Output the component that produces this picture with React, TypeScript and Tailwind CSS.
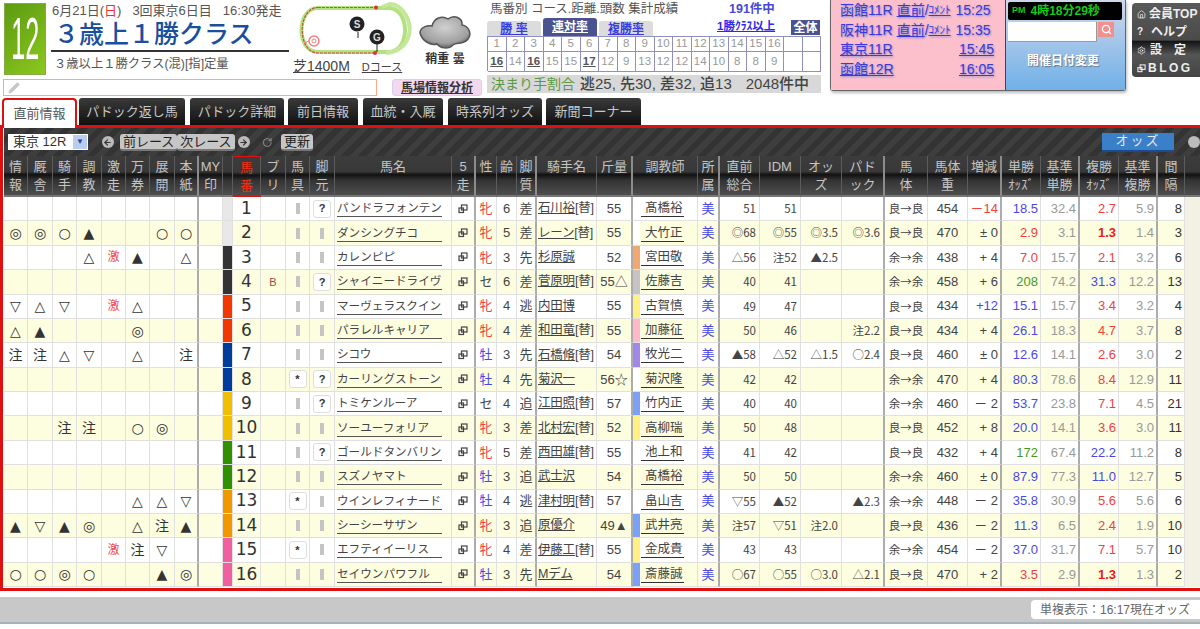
import React from 'react';
import { ArrowLeft, ArrowRight, Home, Pencil, RotateCw, Search, Settings } from 'lucide-react';

type Horse = {
  marks: string[]; frame: string; buri?: string; gear?: boolean; leg?: boolean; name: string;
  sex: string; age: number; style: string; jockey: string; kin: string; trainer: string; strip?: string;
  idx: string[]; body: string; weight: number; diff: string; win: string; winBase: string; place: string; placeBase: string; gap: number;
};

const e = ['', '', '', '', '', '', '', ''];
const horses: Horse[] = [
  { marks: e, frame: 'bg-[#e8e8e8]', leg: true, name: 'パンドラフォンテン', sex: '牝', age: 6, style: '差', jockey: '石川裕[替]', kin: '55', trainer: '髙橋裕', idx: ['51', '51', '', ''], body: '良→良', weight: 454, diff: '－14', win: '18.5', winBase: '32.4', place: '2.7', placeBase: '5.9', gap: 8 },
  { marks: ['◎', '◎', '○', '▲', '', '', '○', '○'], frame: 'bg-[#e8e8e8]', name: 'ダンシングチコ', sex: '牝', age: 5, style: '差', jockey: 'レーン[替]', kin: '55', trainer: '大竹正', strip: 'bg-white', idx: ['◎68', '◎55', '◎3.5', '◎3.6'], body: '良→良', weight: 470, diff: '± 0', win: '2.9', winBase: '3.1', place: '1.3', placeBase: '1.4', gap: 3 },
  { marks: ['', '', '', '△', '激', '▲', '', '△'], frame: 'bg-[#333333]', name: 'カレンピピ', sex: '牝', age: 3, style: '先', jockey: '杉原誠', kin: '52', trainer: '宮田敬', strip: 'bg-[#f0a870]', idx: ['△56', '注52', '▲2.5', ''], body: '余→余', weight: 438, diff: '+ 4', win: '7.0', winBase: '15.7', place: '2.1', placeBase: '3.2', gap: 6 },
  { marks: e, frame: 'bg-[#333333]', buri: 'B', leg: true, name: 'シャイニードライヴ', sex: 'セ', age: 6, style: '差', jockey: '菅原明[替]', kin: '55△', trainer: '佐藤吉', strip: 'bg-[#c4c4c4]', idx: ['40', '41', '', ''], body: '余→余', weight: 458, diff: '+ 6', win: '208', winBase: '74.2', place: '31.3', placeBase: '12.2', gap: 13 },
  { marks: ['▽', '△', '▽', '', '激', '△', '', ''], frame: 'bg-[#f03800]', name: 'マーヴェラスクイン', sex: '牝', age: 4, style: '逃', jockey: '内田博', kin: '55', trainer: '古賀慎', strip: 'bg-[#fff080]', idx: ['49', '47', '', ''], body: '良→良', weight: 434, diff: '+12', win: '15.1', winBase: '15.7', place: '3.4', placeBase: '3.2', gap: 4 },
  { marks: ['△', '▲', '', '', '', '◎', '', ''], frame: 'bg-[#f03800]', name: 'パラレルキャリア', sex: '牝', age: 4, style: '差', jockey: '和田竜[替]', kin: '55', trainer: '加藤征', strip: 'bg-[#ffb8c8]', idx: ['50', '46', '', '注2.2'], body: '良→良', weight: 434, diff: '+ 4', win: '26.1', winBase: '18.3', place: '4.7', placeBase: '3.7', gap: 8 },
  { marks: ['注', '注', '△', '▽', '', '△', '', '注'], frame: 'bg-[#003c9c]', name: 'シコウ', sex: '牡', age: 3, style: '先', jockey: '石橋脩[替]', kin: '54', trainer: '牧光二', strip: 'bg-[#a088e8]', idx: ['▲58', '△52', '△1.5', '○2.4'], body: '良→良', weight: 460, diff: '± 0', win: '12.6', winBase: '14.1', place: '2.6', placeBase: '3.0', gap: 2 },
  { marks: e, frame: 'bg-[#003c9c]', gear: true, leg: true, name: 'カーリングストーン', sex: '牡', age: 4, style: '先', jockey: '菊沢一', kin: '56☆', trainer: '菊沢隆', strip: 'bg-white', idx: ['42', '42', '', ''], body: '余→余', weight: 470, diff: '+ 4', win: '80.3', winBase: '78.6', place: '8.4', placeBase: '12.9', gap: 11 },
  { marks: e, frame: 'bg-[#f0c000]', leg: true, name: 'トミケンルーア', sex: 'セ', age: 4, style: '追', jockey: '江田照[替]', kin: '57', trainer: '竹内正', strip: 'bg-[#7aa0f8]', idx: ['40', '40', '', ''], body: '余→余', weight: 460, diff: '－ 2', win: '53.7', winBase: '23.8', place: '7.1', placeBase: '4.5', gap: 21 },
  { marks: ['', '', '注', '注', '', '○', '◎', ''], frame: 'bg-[#f0c000]', name: 'ソーユーフォリア', sex: '牝', age: 3, style: '差', jockey: '北村宏[替]', kin: '52', trainer: '高柳瑞', strip: 'bg-[#fff080]', idx: ['50', '48', '', ''], body: '良→良', weight: 452, diff: '+ 8', win: '20.0', winBase: '14.1', place: '3.6', placeBase: '3.0', gap: 11 },
  { marks: e, frame: 'bg-[#2f9000]', leg: true, name: 'ゴールドタンバリン', sex: '牝', age: 5, style: '差', jockey: '西田雄[替]', kin: '55', trainer: '池上和', idx: ['41', '42', '', ''], body: '良→良', weight: 432, diff: '+ 4', win: '172', winBase: '67.4', place: '22.2', placeBase: '11.2', gap: 8 },
  { marks: e, frame: 'bg-[#2f9000]', name: 'スズノヤマト', sex: '牡', age: 3, style: '追', jockey: '武士沢', kin: '54', trainer: '髙橋裕', idx: ['50', '50', '', ''], body: '余→余', weight: 460, diff: '± 0', win: '87.9', winBase: '77.3', place: '11.0', placeBase: '12.7', gap: 5 },
  { marks: ['', '', '', '', '', '△', '△', '▽'], frame: 'bg-[#f09800]', gear: true, name: 'ウインレフィナード', sex: '牡', age: 4, style: '逃', jockey: '津村明[替]', kin: '57', trainer: '畠山吉', idx: ['▽55', '▲52', '', '▲2.3'], body: '余→余', weight: 448, diff: '－ 2', win: '35.8', winBase: '30.9', place: '5.6', placeBase: '5.6', gap: 6 },
  { marks: ['▲', '▽', '▲', '◎', '', '△', '注', '▲'], frame: 'bg-[#f09800]', name: 'シーシーサザン', sex: '牝', age: 3, style: '追', jockey: '原優介', kin: '49▲', trainer: '武井亮', strip: 'bg-[#7aa0f8]', idx: ['注57', '▽51', '注2.0', ''], body: '良→良', weight: 436, diff: '－ 2', win: '11.3', winBase: '6.5', place: '2.4', placeBase: '1.9', gap: 10 },
  { marks: ['', '', '', '', '激', '注', '▽', ''], frame: 'bg-[#f060a0]', gear: true, name: 'エフティイーリス', sex: '牝', age: 4, style: '差', jockey: '伊藤工[替]', kin: '55', trainer: '金成貴', strip: 'bg-[#fff080]', idx: ['43', '43', '', ''], body: '余→余', weight: 454, diff: '－ 2', win: '37.0', winBase: '31.7', place: '7.1', placeBase: '5.7', gap: 10 },
  { marks: ['○', '○', '◎', '○', '', '', '▲', '◎'], frame: 'bg-[#f060a0]', name: 'セイウンパワフル', sex: '牡', age: 3, style: '先', jockey: 'Mデム', kin: '54', trainer: '斎藤誠', strip: 'bg-[#7aa0f8]', idx: ['○67', '○55', '○3.0', '△2.1'], body: '良→良', weight: 470, diff: '+ 2', win: '3.5', winBase: '2.9', place: '1.3', placeBase: '1.3', gap: 2 },
];

const headers: { a: string; b?: string; thick?: boolean; active?: boolean }[] = [
  { a: '情', b: '報' }, { a: '厩', b: '舎' }, { a: '騎', b: '手' }, { a: '調', b: '教' }, { a: '激', b: '走' },
  { a: '万', b: '券' }, { a: '展', b: '開' }, { a: '本', b: '紙', thick: true }, { a: 'MY', b: '印' }, { a: '' },
  { a: '馬', b: '番', active: true }, { a: 'ブ', b: 'リ' }, { a: '馬', b: '具' }, { a: '脚', b: '元' }, { a: '馬名' },
  { a: '5', b: '走', thick: true }, { a: '性' }, { a: '齢' }, { a: '脚', b: '質', thick: true }, { a: '騎手名' },
  { a: '斤量', thick: true }, { a: '調教師' }, { a: '所', b: '属', thick: true }, { a: '直前', b: '総合' }, { a: 'IDM' },
  { a: 'オッ', b: 'ズ' }, { a: 'パド', b: 'ック', thick: true }, { a: '馬', b: '体' }, { a: '馬体', b: '重' }, { a: '増減', thick: true },
  { a: '単勝', b: 'ｵｯｽﾞ' }, { a: '基準', b: '単勝', thick: true }, { a: '複勝', b: 'ｵｯｽﾞ' }, { a: '基準', b: '複勝', thick: true }, { a: '間', b: '隔' }, { a: '' },
];

const gridTop = ['1', '2', '3', '4', '5', '6', '7', '8', '9', '10', '11', '12', '13', '14', '15', '16', '', ''];
const gridBottom = ['16', '14', '16', '15', '15', '17', '12', '9', '13', '12', '12', '14', '10', '8', '8', '9', '', ''];

const tabClass = 'flex items-center justify-center rounded-t-[3px] bg-[linear-gradient(180deg,#3a3a3a,#111111)] text-[#c8c8c8]';

const winColor = (v: string) => {
  const n = parseFloat(v);
  if (n >= 100) return 'text-[#4a9a20]';
  if (n < 10) return 'text-[#f04040]';
  return 'text-[#4848e8]';
};
const placeColor = (v: string) => {
  const n = parseFloat(v);
  if (n < 2) return 'text-[#f01818] font-bold';
  if (n >= 10) return 'text-[#4848e8]';
  return 'text-[#f04040]';
};
const diffColor = (v: string) => {
  if (v === '－14') return 'text-[#f04040]';
  if (v === '+12') return 'text-[#4848e8]';
  return 'text-[#444444]';
};

const Cell = ({ thick, className, children }: { thick?: boolean; className?: string; children?: React.ReactNode }) => (
  <div className={`flex min-w-0 items-center overflow-hidden whitespace-nowrap border-b border-[#e0e0e0] ${thick ? 'border-r-2 border-r-[#acacac]' : 'border-r'} ${className ?? ''}`}>
    {children}
  </div>
);

const WinIcon = ({ color = '#444', size = 10 }: { color?: string; size?: number }) => (
  <svg width={size} height={size} viewBox="0 0 10 10" fill="none" stroke={color} strokeWidth="1.2">
    <rect x="3.5" y="1" width="5.5" height="5" />
    <rect x="1" y="4" width="4.5" height="4.5" />
  </svg>
);

const Bar = () => <span className="mx-auto h-[11px] w-[4px] bg-[#c4c4c4]" />;

const SmallBox = ({ children }: { children: string }) => (
  <span className="mx-auto flex h-[18px] w-[18px] items-center justify-center rounded-[3px] border border-[#dddddd] bg-white text-[11px] font-bold text-[#333333]">
    {children}
  </span>
);

const ToolButton = ({ children }: { children: string }) => (
  <span className="flex h-[17px] items-center rounded-[3px] border-b-2 border-[#777777] bg-[#c6c6c6] px-[3px] text-[13px] leading-none text-[#222222]">
    {children}
  </span>
);

const CircleIcon = ({ children }: { children?: React.ReactNode }) => (
  <span className="flex h-[12px] w-[12px] items-center justify-center rounded-full bg-[#bbbbbb] text-[#333333]">{children}</span>
);

const CourseMap = () => (
  <svg width="116" height="56" viewBox="0 0 116 56" fill="none">
    <path d="M20 6 H92 C112 8 112 48 92 50 H20 C-2 50 -2 6 20 6 Z" stroke="#b4e080" strokeWidth="4" />
    <path d="M84 5 L92 2 C104 2 116 20 110 36 C106 46 98 50 88 51" stroke="#c4e898" strokeWidth="4" />
    <path d="M20 5.5 H78 M77 51 H20 C-1 51 -1 5.5 20 5.5" stroke="#c85040" strokeWidth="1.2" strokeDasharray="3 1" />
    <circle cx="78" cy="5.5" r="2" fill="#e03030" />
    <circle cx="77" cy="51" r="2" fill="#e03030" />
    <circle cx="16" cy="39" r="5" fill="#ffffff" stroke="#f08080" strokeWidth="1.5" />
    <circle cx="16" cy="39" r="2" stroke="#f08080" />
    <path d="M11 39 L6 41" stroke="#f08080" />
    <path d="M60 30 V36" stroke="#222222" strokeWidth="1" />
    <circle cx="59" cy="22" r="7.5" fill="#222222" />
    <text x="59" y="25.5" textAnchor="middle" fontSize="10" fontWeight="700" fill="#dddddd">S</text>
    <path d="M79 42 V50" stroke="#222222" strokeWidth="1" />
    <circle cx="79" cy="35" r="7.5" fill="#222222" />
    <text x="79" y="38.5" textAnchor="middle" fontSize="10" fontWeight="700" fill="#dddddd">G</text>
  </svg>
);

const Cloud = () => (
  <svg width="54" height="38" viewBox="0 0 54 38">
    <defs>
      <radialGradient id="cloud" cx="50%" cy="35%" r="70%">
        <stop offset="0%" stopColor="#d0d0d0" />
        <stop offset="70%" stopColor="#a0a0a0" />
        <stop offset="100%" stopColor="#505050" />
      </radialGradient>
    </defs>
    <path d="M2 21 C2 15 10 13 14 14 C16 6 24 3 30 7 C36 2 45 6 44 13 C51 14 54 22 50 27 C46 33 38 30 35 33 C30 38 22 36 19 32 C13 34 4 29 2 21 Z" fill="url(#cloud)" stroke="#555555" strokeWidth="1.5" />
  </svg>
);

const App = () => {
  return (
    <div className="h-[629px] w-[1200px] overflow-hidden bg-white text-[13px] text-[#444444] [font-family:'Liberation_Sans','Noto_Sans_CJK_JP',sans-serif]">
      {/* top area */}
      <div className="flex h-[98px]">
        <div className="w-[482px] shrink-0 pl-[3px]">
          <div className="flex h-[79px]">
            <div className="ml-px mt-[3px] flex h-[72px] w-[42px] items-center justify-center overflow-hidden border border-[#88aa44] bg-[linear-gradient(135deg,#5c9a10,#8cc820)]">
              <span className="origin-center scale-x-[0.42] text-[60px] leading-none text-white">12</span>
            </div>
            <div className="ml-[5px] w-[238px] shrink-0">
              <div className="mt-[2px] h-[17px] whitespace-nowrap pl-px text-[13px] leading-[17px] text-[#555555]">
                6月21日(<span className="text-[#f03030]">日</span>)<span className="ml-[11px]">3回東京6日目</span><span className="ml-[11px]">16:30発走</span>
              </div>
              <div className="h-[31px] whitespace-nowrap pl-[3px] text-[25px] font-medium leading-[31px] text-[#1a4f9e]">３歳上１勝クラス</div>
              <div className="h-[2px] bg-[#333333]" />
              <div className="mt-[3px] whitespace-nowrap pl-[3px] text-[12.3px] leading-[18px] text-[#555555]">３歳以上１勝クラス(混)[指]定量</div>
            </div>
            <div className="ml-[4px] w-[120px] shrink-0">
              <div className="ml-[5px] mt-[2px] h-[56px]"><CourseMap /></div>
              <div className="whitespace-nowrap text-[14px] leading-[16px] text-[#444444] underline">芝1400M<span className="ml-3 text-[11px]">Dコース</span></div>
            </div>
            <div className="ml-[5px] w-[54px] shrink-0 pt-[12px]">
              <Cloud />
              <div className="mt-[1px] text-center text-[12px] font-bold leading-[16px] text-[#333333]">稍重 曇</div>
            </div>
          </div>
          <div className="flex h-[19px] items-start">
            <div className="flex h-[17px] w-[374px] items-center border border-[#ffa888] pl-[4px]">
              <Pencil size={12} className="fill-[#c8c8c8] text-[#c8c8c8]" />
            </div>
            <div className="ml-[15px] flex h-[17px] w-[90px] items-center justify-center rounded-[3px] border border-[#d8d0e8] bg-[#f3d8f0] text-[12px] font-bold text-[#333333] underline">馬場情報分析</div>
          </div>
        </div>

        <div className="ml-[5px] w-[334px] shrink-0">
          <div className="flex h-[18px] items-center whitespace-nowrap pl-[3px] text-[12.5px] text-[#555555]">
            <span className="w-[239px]">馬番別 コース.距離.頭数 集計成績</span>
            <span className="font-bold text-[#4848d8]">191件中</span>
          </div>
          <div className="flex h-[18px] items-end">
            <span className="flex h-[15px] w-[54px] items-center justify-center rounded-t-[3px] bg-[#dcdcdc] text-[12px] font-bold text-[#3a3ae0] underline">勝 率</span>
            <span className="ml-[2px] flex h-[18px] w-[54px] items-center justify-center rounded-t-[3px] bg-[#4b5290] text-[12px] font-bold text-white underline">連対率</span>
            <span className="ml-[2px] flex h-[15px] w-[54px] items-center justify-center rounded-t-[3px] bg-[#dcdcdc] text-[12px] font-bold text-[#3a3ae0] underline">複勝率</span>
            <span className="mb-px ml-[64px] w-[60px] whitespace-nowrap text-[11.5px] font-bold text-[#2a2af0] underline">1勝ｸﾗｽ以上</span>
            <span className="mb-px ml-[14px] flex h-[15px] w-[29px] items-center justify-center bg-[#4b5290] text-[12px] font-bold text-white">全体</span>
          </div>
          <div className="grid h-[35px] grid-cols-[repeat(18,18.5px)] grid-rows-[15px_20px] border-l border-t border-[#9090c0] text-[11.5px] text-[#999999]">
            {gridTop.map((v, i) => (
              <div key={i} className="flex items-center justify-center border-b border-r border-[#9090c0] bg-white">{v}</div>
            ))}
            {gridBottom.map((v, i) => (
              <div key={i} className={`flex items-center justify-center border-b border-r border-[#9090c0] bg-white ${i === 0 || i === 2 || i === 5 ? 'font-bold text-[#555555] underline' : ''}`}>{v}</div>
            ))}
          </div>
          <div className="mt-[4px] flex h-[18px] w-[334px] items-center whitespace-nowrap bg-[#d8d8d8] pl-[4px] text-[14px] text-[#444444]">
            <span className="text-[#5a9a40]">決まり手割合</span>
            <span className="ml-[5px] text-[15px] font-medium">逃25, 先30, 差32, 追13</span>
            <span className="ml-[14px] text-[15px] font-medium">2048件中</span>
          </div>
        </div>

        <div className="ml-[9px] flex h-[91px] w-[296px] shrink-0 rounded-b-[3px] border-b border-l border-r border-[#666666] shadow-[1px_2px_3px_#bbbbbb]">
          <div className="w-[175px] shrink-0 border-r border-[#444444] bg-[#fbc0cc] pl-[9px] pt-[1px] text-[14px] leading-[19.7px] text-[#3a3ad8] [text-shadow:1px_1px_2px_#8888cc]">
            <div className="flex whitespace-nowrap"><span>函館11R</span><span className="ml-[4px] underline">直前</span>/<span className="text-[11px] underline">ｺﾒﾝﾄ</span><span className="ml-[5px]">15:25</span></div>
            <div className="flex whitespace-nowrap"><span>阪神11R</span><span className="ml-[4px] underline">直前</span>/<span className="text-[11px] underline">ｺﾒﾝﾄ</span><span className="ml-[5px]">15:35</span></div>
            <div className="flex w-[154px] justify-between whitespace-nowrap underline"><span>東京11R</span><span>15:45</span></div>
            <div className="flex w-[154px] justify-between whitespace-nowrap underline"><span>函館12R</span><span>16:05</span></div>
          </div>
          <div className="flex-1 bg-[linear-gradient(180deg,#cfd8ea,#70b0e8)] pl-[2px] pt-[2px]">
            <div className="flex h-[18px] w-[114px] items-center whitespace-nowrap rounded-[2px] bg-black pl-[4px] text-[12px] font-bold text-[#18c818]">
              <span className="mr-[5px] text-[9px]">PM</span>4時18分29秒
            </div>
            <div className="mt-[2px] flex">
              <div className="h-[20px] w-[89px] border-b border-r border-[#999999] bg-white" />
              <div className="ml-px flex h-[15px] w-[16px] items-center justify-center bg-[#f09090]"><Search size={11} className="text-white" strokeWidth={3} /></div>
            </div>
            <div className="mt-[10px] pl-[19px] text-[12px] font-bold text-white [text-shadow:1px_1px_1px_#667788]">開催日付変更</div>
          </div>
        </div>

        <div className="ml-[6px] mt-[3px] h-[74px] flex-1 rounded-l-[4px] bg-[linear-gradient(180deg,#5a5a5a_0%,#4a4a4a_50%,#151515_52%,#555555_70%,#444444_100%)] pl-[5px] pt-[2px] text-[12px] font-bold leading-[18px] text-[#eeeeee]">
          <div className="flex items-center whitespace-nowrap"><Home size={9} className="mr-[3px]" />会員TOP</div>
          <div className="flex items-center whitespace-nowrap"><span className="mr-[8px] text-[10px]">?</span>ヘルプ</div>
          <div className="flex items-center whitespace-nowrap"><Settings size={9} className="mr-[4px]" />設<span className="ml-3">定</span></div>
          <div className="flex items-center whitespace-nowrap tracking-[2.5px]"><span className="mr-[2px]"><WinIcon color="#eeeeee" size={9} /></span>BLOG</div>
        </div>
      </div>

      {/* tabs */}
      <div className="relative z-10 flex h-[27px] items-stretch pl-[2px] text-[13px]">
        <div className="-mb-[3px] flex w-[75px] items-center justify-center rounded-t-[4px] border-l-[2px] border-r-[2px] border-t-[2px] border-[#e01010] bg-white text-[#555555]">直前情報</div>
        <div className={`ml-[2px] w-[106px] ${tabClass}`}>パドック返し馬</div>
        <div className={`ml-[5px] w-[94px] ${tabClass}`}>パドック詳細</div>
        <div className={`ml-[4px] w-[70px] ${tabClass}`}>前日情報</div>
        <div className={`ml-[5px] w-[80px] ${tabClass}`}>血統・入厩</div>
        <div className={`ml-[5px] w-[94px] ${tabClass}`}>時系列オッズ</div>
        <div className={`ml-[4px] w-[95px] ${tabClass}`}>新聞コーナー</div>
      </div>

      {/* main panel */}
      <div className="h-[466px] overflow-hidden border-b-[3px] border-l-[3px] border-t-[3px] border-[#e01010] pl-px">
        <div className="flex h-[28px] items-center whitespace-nowrap bg-[repeating-linear-gradient(135deg,#3e3e3e_0px,#3e3e3e_6px,#333333_6px,#333333_12px)] pl-[4px]">
          <div className="flex h-[16px] w-[84px] items-center justify-between bg-white pl-[5px] pr-[1px] text-[13px] text-[#333333]">
            東京 12R
            <span className="flex h-[14px] w-[14px] items-center justify-center bg-[#b8cef0] text-[8px] text-[#334488]">▼</span>
          </div>
          <span className="ml-[14px]"><CircleIcon><ArrowLeft size={9} strokeWidth={3} /></CircleIcon></span>
          <span className="ml-[6px]"><ToolButton>前レース</ToolButton></span>
          <ToolButton>次レース</ToolButton>
          <span className="ml-[3px]"><CircleIcon><ArrowRight size={9} strokeWidth={3} /></CircleIcon></span>
          <RotateCw size={11} className="ml-[12px] text-[#999999]" />
          <span className="ml-[9px]"><ToolButton>更新</ToolButton></span>
          <span className="ml-[789px] flex h-[19px] w-[76px] items-center justify-center border-b-2 border-[#1a4a90] bg-[#3a80c8] text-[13px] tracking-[2px] text-[#e8e8e8]">オッズ</span>
          <span className="ml-[14px]"><CircleIcon /></span>
        </div>

        <div className="grid grid-cols-[24px_25px_24px_25px_24px_24px_25px_24px_24px_10px_28px_25px_24px_25px_117px_24px_21px_20px_20px_60px_36px_65px_22px_40px_41px_41px_43px_43px_40px_34px_39px_39px_39px_39px_27px_16px] grid-rows-[41px_repeat(16,24.375px)] bg-white">
          {headers.map((h, i) => (
            <div
              key={i}
              className={`flex flex-col items-center whitespace-nowrap bg-[linear-gradient(180deg,#3c3c3c_0%,#383838_40%,#111111_48%,#333333_62%,#4e4e4e_100%)] pt-[2px] text-[13px] leading-[18px] ${h.thick ? 'border-r-2 border-[#8c8c8c]' : 'border-r border-[#5c5c5c]'} ${h.active ? 'border-b-2 border-t border-b-[#e01010] border-t-[#e01010] text-[#f03010]' : 'border-b-2 border-b-[#777777] text-[#c4c4c4]'}`}
            >
              <span>{h.a}</span>
              <span>{h.b}</span>
            </div>
          ))}
          {horses.map((h, r) => {
            const bg = r % 2 === 1 ? 'bg-[#fdfde0]' : 'bg-white';
            const idxClass = `justify-end pr-[3px] text-[11.5px] [font-family:'Noto_Sans_CJK_JP',sans-serif] ${bg}`;
            return (
              <React.Fragment key={h.name}>
                {h.marks.map((m, i) => (
                  <Cell key={i} thick={i === 7} className={`justify-center leading-none [font-family:'DejaVu_Sans','Noto_Sans_CJK_JP',sans-serif] ${bg} ${m === '激' ? 'text-[12px] text-[#f05050]' : 'text-[14px] text-[#333333]'}`}>{m}</Cell>
                ))}
                <Cell className={bg} />
                <Cell className={`border-[#d8d8d8] ${h.frame}`} />
                <Cell className={`justify-center text-[17px] text-[#333333] [font-family:'DejaVu_Sans',sans-serif] ${bg}`}>{r + 1}</Cell>
                <Cell className={`justify-center text-[11px] text-[#a04848] ${bg}`}>{h.buri}</Cell>
                <Cell className={bg}>{h.gear ? <SmallBox>*</SmallBox> : <Bar />}</Cell>
                <Cell className={bg}>{h.leg ? <SmallBox>?</SmallBox> : <Bar />}</Cell>
                <Cell className={`pl-[2px] ${bg}`}>
                  <span className="block w-[105px] border-b border-[#555555] text-[11.6px] leading-[16px] text-[#444444]">{h.name}</span>
                </Cell>
                <Cell thick className={`justify-center ${bg}`}><WinIcon /></Cell>
                <Cell className={`justify-center ${bg} ${h.sex === '牝' ? 'text-[#f04040]' : h.sex === '牡' ? 'text-[#4848e8]' : 'text-[#444444]'}`}>{h.sex}</Cell>
                <Cell className={`justify-center ${bg}`}>{h.age}</Cell>
                <Cell thick className={`justify-center ${bg}`}>{h.style}</Cell>
                <Cell className={`pl-[1px] text-[12.5px] tracking-[-0.2px] ${bg}`}>
                  <span className="underline">{h.jockey.replace('[替]', '')}</span>{h.jockey.includes('[替]') ? '[替]' : ''}
                </Cell>
                <Cell thick className={`justify-center ${bg}`}>{h.kin}</Cell>
                <Cell className={bg}>
                  <span className={`h-full w-[7px] shrink-0 ${h.strip ?? ''}`} />
                  <span className="ml-px border-b border-[#333333] pl-[4px] pr-px text-[12.5px] leading-[16px]">{h.trainer}</span>
                </Cell>
                <Cell thick className={`justify-center text-[#4848e8] ${bg}`}>美</Cell>
                <Cell className={idxClass}>{h.idx[0]}</Cell>
                <Cell className={idxClass}>{h.idx[1]}</Cell>
                <Cell className={idxClass}>{h.idx[2]}</Cell>
                <Cell thick className={idxClass}>{h.idx[3]}</Cell>
                <Cell className={`justify-center text-[11.5px] [font-family:'Noto_Sans_CJK_JP',sans-serif] ${bg}`}>{h.body}</Cell>
                <Cell className={`justify-center ${bg}`}>{h.weight}</Cell>
                <Cell thick className={`justify-end pr-[2px] ${bg} ${diffColor(h.diff)}`}>{h.diff}</Cell>
                <Cell className={`justify-end pr-[2px] ${bg} ${winColor(h.win)}`}>{h.win}</Cell>
                <Cell thick className={`justify-end pr-[2px] text-[#999999] ${bg}`}>{h.winBase}</Cell>
                <Cell className={`justify-end pr-[2px] ${bg} ${placeColor(h.place)}`}>{h.place}</Cell>
                <Cell thick className={`justify-end pr-[2px] text-[#999999] ${bg}`}>{h.placeBase}</Cell>
                <Cell className={`justify-end pr-[2px] text-[#333333] ${bg}`}>{h.gap}</Cell>
                <div className="bg-[#f3f0e4]" />
              </React.Fragment>
            );
          })}
        </div>
      </div>

      {/* bottom bar */}
      <div className="mt-[6px] flex h-[27px] items-center justify-end border-b-2 border-[#a8b0b8] bg-[#c8c8c8]">
        <div className="flex h-[19px] w-[169px] items-center whitespace-nowrap rounded-l-[4px] bg-white pl-[9px] text-[12px] text-[#666666]">単複表示：16:17現在オッズ</div>
      </div>
    </div>
  );
};

export default App;
